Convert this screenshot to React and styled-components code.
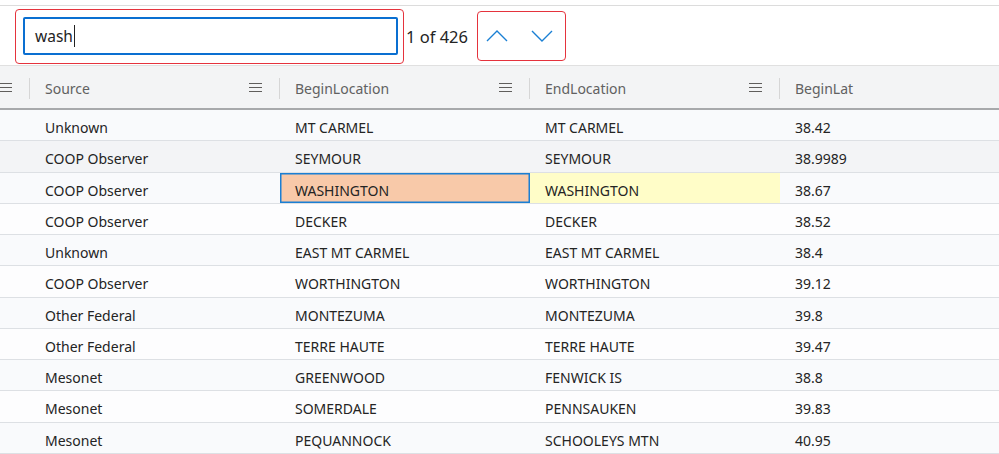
import React from 'react'
import styled, { createGlobalStyle } from 'styled-components'

const Global = createGlobalStyle`
  html, body {
    margin: 0;
    padding: 0;
    background: #ffffff;
    font-family: "Noto Sans", "Open Sans", sans-serif;
    overflow: hidden;
  }
`

const Page = styled.div`
  width: 999px;
  height: 454px;
  overflow: hidden;
  background: #ffffff;
  padding-top: 5px;
  box-sizing: border-box;
`

const Toolbar = styled.div`
  display: flex;
  align-items: center;
  height: 61px;
  padding-left: 15px;
  padding-top: 1px;
  border-top: 1.5px solid #dcdcdc;
  border-bottom: 1px solid #e0e0e0;
  box-sizing: border-box;
`

const RedFrame = styled.div`
  display: flex;
  align-items: center;
  border: 1.5px solid #e5333d;
  border-radius: 4px;
  box-sizing: border-box;
`

const SearchFrame = styled(RedFrame)`
  width: 389px;
  height: 55px;
  padding: 0 5px 0 7px;
`

const SearchBox = styled.div`
  display: flex;
  align-items: center;
  width: 100%;
  height: 38px;
  border: 2px solid #0a6fd1;
  border-radius: 2px;
  box-sizing: border-box;
  padding-left: 10px;
  font-size: 15.5px;
  color: #242424;
`

const Caret = styled.span`
  display: inline-block;
  width: 1px;
  height: 22px;
  background: #222;
  margin-left: 1px;
`

const Count = styled.span`
  margin-left: 2px;
  font-size: 16.5px;
  color: #242424;
  white-space: nowrap;
`

const NavFrame = styled(RedFrame)`
  margin-left: 9px;
  width: 89px;
  height: 50px;
  justify-content: space-between;
  padding: 0 12px 0 8px;
`

const NavButton = styled.button`
  border: none;
  background: none;
  padding: 0;
  display: flex;
  align-items: center;
  justify-content: center;
  width: 22px;
  height: 22px;
`

const Grid = styled.div`
  overflow: hidden;
`

const Track = styled.div`
  margin-left: -220px;
  width: 1250px;
`

const HeaderRow = styled.div`
  display: grid;
  grid-template-columns: repeat(5, 250px);
  height: 42px;
  background: #f3f4f5;
  border-bottom: 2px solid #a7a9ab;
`

const HeaderCell = styled.div`
  position: relative;
  display: flex;
  align-items: center;
  padding: 3px 18px 0 15px;
  font-size: 14px;
  color: #616161;
  ${p => p.$divider && `
    &::before {
      content: '';
      position: absolute;
      left: -1px;
      top: 12px;
      height: 21px;
      width: 1px;
      background: #d6d6d6;
    }
  `}
`

const HeaderLabel = styled.span`
  flex: 1;
`

const Menu = styled.span`
  display: flex;
  flex-direction: column;
  gap: 3px;
  width: 13px;
  margin-top: -2px;
  span {
    display: block;
    height: 1.3px;
    background: #605e5c;
  }
`

const Row = styled.div`
  display: grid;
  grid-template-columns: repeat(5, 250px);
  height: 31.25px;
  box-sizing: border-box;
  border-bottom: 1px solid #dde0e4;
  background: ${p => p.$bg};
`

const Cell = styled.div`
  display: flex;
  align-items: center;
  padding: 5px 0 0 15px;
  font-size: 14px;
  color: #242424;
  box-sizing: border-box;
  white-space: nowrap;
  background: ${p => (p.$match === 'current' ? '#f8c9a9' : p.$match === 'hit' ? '#fffdc8' : 'transparent')};
  ${p => p.$match === 'current' && `
    box-shadow: inset 0 0 0 1.5px #1a7fd4;
  `}
`

const columns = ['', 'Source', 'BeginLocation', 'EndLocation', 'BeginLat']

const rows = [
  ['Unknown', 'MT CARMEL', 'MT CARMEL', '38.42'],
  ['COOP Observer', 'SEYMOUR', 'SEYMOUR', '38.9989'],
  ['COOP Observer', 'WASHINGTON', 'WASHINGTON', '38.67'],
  ['COOP Observer', 'DECKER', 'DECKER', '38.52'],
  ['Unknown', 'EAST MT CARMEL', 'EAST MT CARMEL', '38.4'],
  ['COOP Observer', 'WORTHINGTON', 'WORTHINGTON', '39.12'],
  ['Other Federal', 'MONTEZUMA', 'MONTEZUMA', '39.8'],
  ['Other Federal', 'TERRE HAUTE', 'TERRE HAUTE', '39.47'],
  ['Mesonet', 'GREENWOOD', 'FENWICK IS', '38.8'],
  ['Mesonet', 'SOMERDALE', 'PENNSAUKEN', '39.83'],
  ['Mesonet', 'PEQUANNOCK', 'SCHOOLEYS MTN', '40.95'],
]

const Chevron = ({ up }) => (
  <svg width="22" height="12" viewBox="0 0 22 12">
    <path
      d={up ? 'M1 11 L11 1 L21 11' : 'M1 1 L11 11 L21 1'}
      fill="none"
      stroke="#1a7fd4"
      strokeWidth="1.4"
    />
  </svg>
)

const rowBg = (i) => {
  if (i === 1) return '#f3f4f6'
  return i % 2 === 0 ? '#f9fafc' : '#fdfdfe'
}

const matchOf = (r, c, val) => {
  if (!/WASH/i.test(val)) return null
  if (r === 2 && c === 2) return 'current'
  return 'hit'
}

const App = () => {
  return (
    <>
      <Global />
      <Page>
        <Toolbar>
          <SearchFrame>
            <SearchBox>
              wash<Caret />
            </SearchBox>
          </SearchFrame>
          <Count>1 of 426</Count>
          <NavFrame>
            <NavButton><Chevron up /></NavButton>
            <NavButton><Chevron /></NavButton>
          </NavFrame>
        </Toolbar>
        <Grid>
          <Track>
            <HeaderRow>
              {columns.map((c, i) => (
                <HeaderCell key={i} $divider={i > 0}>
                  <HeaderLabel>{c}</HeaderLabel>
                  <Menu><span /><span /><span /></Menu>
                </HeaderCell>
              ))}
            </HeaderRow>
            {rows.map((r, ri) => (
              <Row key={ri} $bg={rowBg(ri)}>
                <Cell />
                {r.map((v, ci) => (
                  <Cell key={ci} $match={matchOf(ri, ci + 1, v)}>{v}</Cell>
                ))}
              </Row>
            ))}
          </Track>
        </Grid>
      </Page>
    </>
  )
}

export default App
